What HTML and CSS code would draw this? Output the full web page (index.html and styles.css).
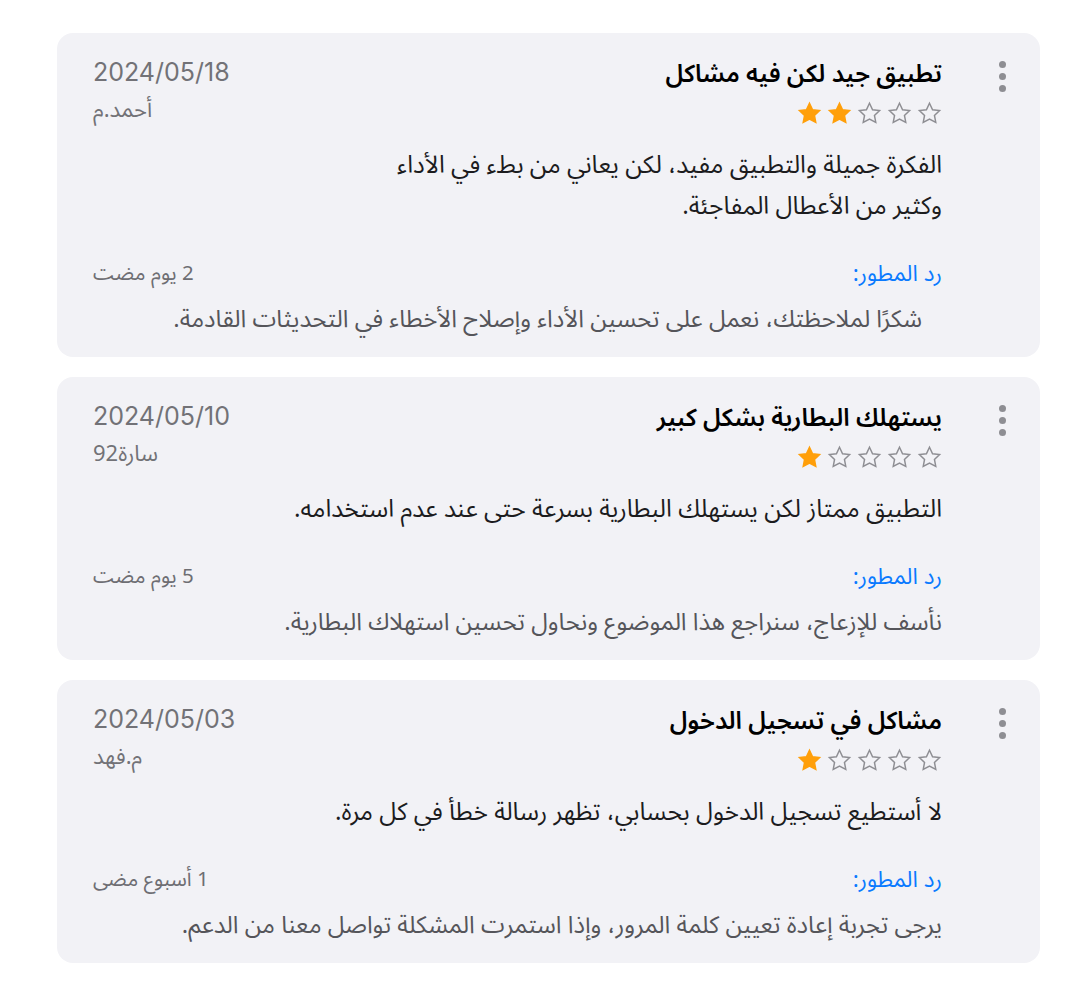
FILE: index.html
```html
<!DOCTYPE html>
<html lang="ar" dir="rtl">
<head>
<meta charset="utf-8">
<title>المراجعات</title>
<link rel="stylesheet" href="styles.css">
</head>
<body>
<main class="reviews">
  <article class="card">
    <div class="card-menu" aria-label="المزيد"><span class="dot"></span><span class="dot"></span><span class="dot"></span></div>
    <div class="card-body">
      <header class="card-head">
        <div class="head-main">
          <h2 class="title">تطبيق جيد لكن فيه مشاكل</h2>
          <div class="stars" aria-label="2 من 5">
            <svg class="star on" viewBox="0 0 24 24"><path d="M12 2.2l2.95 6.2 6.75.85-4.95 4.65 1.28 6.7L12 17.3l-6.03 3.3 1.28-6.7L2.3 9.25l6.75-.85z"/></svg>
            <svg class="star on" viewBox="0 0 24 24"><path d="M12 2.2l2.95 6.2 6.75.85-4.95 4.65 1.28 6.7L12 17.3l-6.03 3.3 1.28-6.7L2.3 9.25l6.75-.85z"/></svg>
            <svg class="star" viewBox="0 0 24 24"><path d="M12 2.2l2.95 6.2 6.75.85-4.95 4.65 1.28 6.7L12 17.3l-6.03 3.3 1.28-6.7L2.3 9.25l6.75-.85z"/></svg>
            <svg class="star" viewBox="0 0 24 24"><path d="M12 2.2l2.95 6.2 6.75.85-4.95 4.65 1.28 6.7L12 17.3l-6.03 3.3 1.28-6.7L2.3 9.25l6.75-.85z"/></svg>
            <svg class="star" viewBox="0 0 24 24"><path d="M12 2.2l2.95 6.2 6.75.85-4.95 4.65 1.28 6.7L12 17.3l-6.03 3.3 1.28-6.7L2.3 9.25l6.75-.85z"/></svg>
          </div>
        </div>
        <div class="head-meta">
          <div class="date" dir="ltr">2024/05/18</div>
          <div class="author">أحمد.م</div>
        </div>
      </header>
      <p class="text"><span class="text-line">الفكرة جميلة والتطبيق مفيد، لكن يعاني من بطء في الأداء</span><span class="text-line">وكثير من الأعطال المفاجئة.</span></p>
      <div class="reply">
        <div class="reply-head"><span class="reply-label">رد المطور:</span><span class="reply-time">2 يوم مضت</span></div>
        <p class="reply-text reply-text--inset">شكرًا لملاحظتك، نعمل على تحسين الأداء وإصلاح الأخطاء في التحديثات القادمة.</p>
      </div>
    </div>
  </article>

  <article class="card">
    <div class="card-menu" aria-label="المزيد"><span class="dot"></span><span class="dot"></span><span class="dot"></span></div>
    <div class="card-body">
      <header class="card-head">
        <div class="head-main">
          <h2 class="title">يستهلك البطارية بشكل كبير</h2>
          <div class="stars" aria-label="1 من 5">
            <svg class="star on" viewBox="0 0 24 24"><path d="M12 2.2l2.95 6.2 6.75.85-4.95 4.65 1.28 6.7L12 17.3l-6.03 3.3 1.28-6.7L2.3 9.25l6.75-.85z"/></svg>
            <svg class="star" viewBox="0 0 24 24"><path d="M12 2.2l2.95 6.2 6.75.85-4.95 4.65 1.28 6.7L12 17.3l-6.03 3.3 1.28-6.7L2.3 9.25l6.75-.85z"/></svg>
            <svg class="star" viewBox="0 0 24 24"><path d="M12 2.2l2.95 6.2 6.75.85-4.95 4.65 1.28 6.7L12 17.3l-6.03 3.3 1.28-6.7L2.3 9.25l6.75-.85z"/></svg>
            <svg class="star" viewBox="0 0 24 24"><path d="M12 2.2l2.95 6.2 6.75.85-4.95 4.65 1.28 6.7L12 17.3l-6.03 3.3 1.28-6.7L2.3 9.25l6.75-.85z"/></svg>
            <svg class="star" viewBox="0 0 24 24"><path d="M12 2.2l2.95 6.2 6.75.85-4.95 4.65 1.28 6.7L12 17.3l-6.03 3.3 1.28-6.7L2.3 9.25l6.75-.85z"/></svg>
          </div>
        </div>
        <div class="head-meta">
          <div class="date" dir="ltr">2024/05/10</div>
          <div class="author">سارة92</div>
        </div>
      </header>
      <p class="text"><span class="text-line">التطبيق ممتاز لكن يستهلك البطارية بسرعة حتى عند عدم استخدامه.</span></p>
      <div class="reply">
        <div class="reply-head"><span class="reply-label">رد المطور:</span><span class="reply-time">5 يوم مضت</span></div>
        <p class="reply-text">نأسف للإزعاج، سنراجع هذا الموضوع ونحاول تحسين استهلاك البطارية.</p>
      </div>
    </div>
  </article>

  <article class="card">
    <div class="card-menu" aria-label="المزيد"><span class="dot"></span><span class="dot"></span><span class="dot"></span></div>
    <div class="card-body">
      <header class="card-head">
        <div class="head-main">
          <h2 class="title">مشاكل في تسجيل الدخول</h2>
          <div class="stars" aria-label="1 من 5">
            <svg class="star on" viewBox="0 0 24 24"><path d="M12 2.2l2.95 6.2 6.75.85-4.95 4.65 1.28 6.7L12 17.3l-6.03 3.3 1.28-6.7L2.3 9.25l6.75-.85z"/></svg>
            <svg class="star" viewBox="0 0 24 24"><path d="M12 2.2l2.95 6.2 6.75.85-4.95 4.65 1.28 6.7L12 17.3l-6.03 3.3 1.28-6.7L2.3 9.25l6.75-.85z"/></svg>
            <svg class="star" viewBox="0 0 24 24"><path d="M12 2.2l2.95 6.2 6.75.85-4.95 4.65 1.28 6.7L12 17.3l-6.03 3.3 1.28-6.7L2.3 9.25l6.75-.85z"/></svg>
            <svg class="star" viewBox="0 0 24 24"><path d="M12 2.2l2.95 6.2 6.75.85-4.95 4.65 1.28 6.7L12 17.3l-6.03 3.3 1.28-6.7L2.3 9.25l6.75-.85z"/></svg>
            <svg class="star" viewBox="0 0 24 24"><path d="M12 2.2l2.95 6.2 6.75.85-4.95 4.65 1.28 6.7L12 17.3l-6.03 3.3 1.28-6.7L2.3 9.25l6.75-.85z"/></svg>
          </div>
        </div>
        <div class="head-meta">
          <div class="date" dir="ltr">2024/05/03</div>
          <div class="author">م.فهد</div>
        </div>
      </header>
      <p class="text"><span class="text-line">لا أستطيع تسجيل الدخول بحسابي، تظهر رسالة خطأ في كل مرة.</span></p>
      <div class="reply">
        <div class="reply-head"><span class="reply-label">رد المطور:</span><span class="reply-time">1 أسبوع مضى</span></div>
        <p class="reply-text">يرجى تجربة إعادة تعيين كلمة المرور، وإذا استمرت المشكلة تواصل معنا من الدعم.</p>
      </div>
    </div>
  </article>
</main>
</body>
</html>
```

FILE: styles.css
```css
* { box-sizing: border-box; }

html, body {
  margin: 0;
  padding: 0;
  background: #ffffff;
}

body {
  font-family: "Noto Sans Arabic", "DejaVu Sans", "Noto Sans", sans-serif;
  color: #1c1c1e;
}

.reviews {
  display: flex;
  flex-direction: column;
  gap: 20px;
  padding: 33px 43px 28px 57px;
}

.card {
  display: flex;
  flex-direction: row;
  background: #f2f2f6;
  border-radius: 16px;
  padding: 24px 25px 21px 36px;
}

.card-menu {
  flex: 0 0 26px;
  display: flex;
  flex-direction: column;
  align-items: center;
  gap: 5px;
  padding-top: 4px;
  margin-left: 47px;
}

.dot {
  width: 7px;
  height: 7px;
  border-radius: 50%;
  background: #8e8e93;
}

.card-body {
  flex: 1 1 auto;
  min-width: 0;
}

.card-head {
  display: flex;
  justify-content: space-between;
  align-items: flex-start;
}

.head-main {
  display: flex;
  flex-direction: column;
  align-items: flex-start;
}

.title {
  margin: 0;
  font-size: 24.5px;
  line-height: 34px;
  font-weight: 600;
  color: #000000;
}

.stars {
  direction: ltr;
  display: flex;
  gap: 5px;
  margin-top: 10px;
}

.star {
  width: 25px;
  height: 25px;
}

.star path {
  fill: none;
  stroke: #8e8e93;
  stroke-width: 1.4;
  stroke-linejoin: miter;
}

.star.on path {
  fill: #ff9f0a;
  stroke: #ff9f0a;
}

.head-meta {
  display: flex;
  flex-direction: column;
  align-items: flex-end;
  margin-top: -2px;
}

.date {
  font-family: Inter, Roboto, "Liberation Sans", sans-serif;
  font-size: 25px;
  line-height: 34px;
  color: #727277;
}

.author {
  font-size: 22px;
  line-height: 30px;
  color: #727277;
  margin-top: 6px;
}

.text {
  margin: 19px 0 0;
  font-size: 24.5px;
  color: #1c1c1e;
}

.text-line {
  display: block;
  line-height: 41px;
}

.reply {
  margin-top: 31px;
}

.reply-head {
  display: flex;
  justify-content: space-between;
  align-items: center;
  height: 32px;
}

.reply-label {
  font-size: 22.5px;
  line-height: 32px;
  color: #0a7aff;
}

.reply-time {
  font-size: 20.5px;
  line-height: 32px;
  color: #6e6e73;
}

.reply-text {
  margin: 14px 0 0;
  font-size: 24px;
  line-height: 32px;
  color: #55555a;
}

.reply-text--inset {
  padding-right: 20px;
}
```
